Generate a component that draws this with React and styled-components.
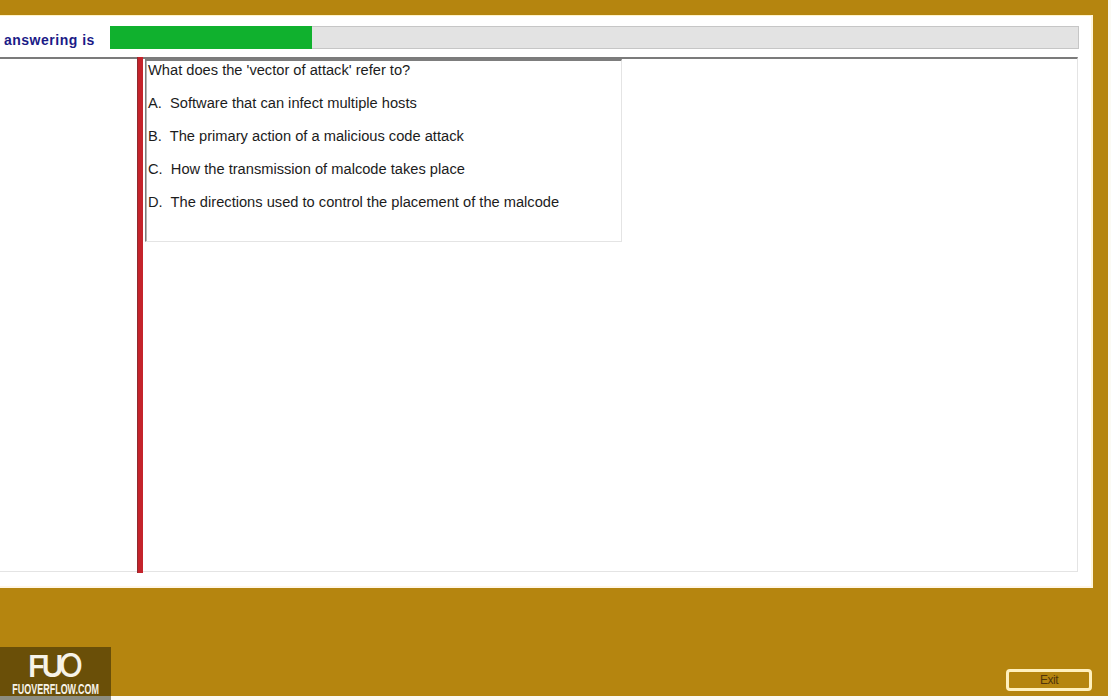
import React from "react";
import styled, { createGlobalStyle } from "styled-components";

const GlobalStyle = createGlobalStyle`
  html, body {
    margin: 0;
    padding: 0;
    height: 100%;
    overflow: hidden;
    background: #fbfaf4;
  }
`;

const Page = styled.div`
  position: relative;
  width: 1108px;
  height: 696px;
  padding-top: 15px;
  box-sizing: border-box;
  background: #b5850f;
  font-family: "Liberation Sans", Arial, sans-serif;
`;

const Panel = styled.div`
  width: 1093px;
  height: 573px;
  background: #ffffff;
  box-shadow: inset -2px 0 0 #fff6dc, inset 0 1px 0 #fff3c8, inset 0 -2px 0 #fff6e6;
`;

const TopRow = styled.div`
  display: flex;
  align-items: center;
  height: 42px;
  padding: 3px 14px 0 4px;
  box-sizing: border-box;
`;

const Label = styled.div`
  width: 106px;
  flex: none;
  padding-top: 4px;
  font-size: 14px;
  font-weight: bold;
  letter-spacing: 0.5px;
  color: #1b1b87;
  white-space: nowrap;
`;

const Track = styled.div`
  flex: 1;
  height: 23px;
  box-sizing: border-box;
  border: 1px solid #c6c6c6;
  background: #e3e3e3;
`;

const Fill = styled.div`
  height: 100%;
  background: #10b12e;
  margin: -1px 0 0 -1px;
  padding-bottom: 2px;
`;

const Body = styled.div`
  display: flex;
  width: 1078px;
  height: 515px;
  box-sizing: border-box;
  border-top: 2px solid #7b7b7b;
  border-right: 1px solid #e4e4e4;
  border-bottom: 1px solid #e4e4e4;
`;

const Side = styled.div`
  width: 137px;
  flex: none;
`;

const RedBar = styled.div`
  width: 6px;
  flex: none;
  margin: -2px 0 -2px;
  background: #c4232b;
  border-left: 1px solid #8f2a2e;
  box-sizing: border-box;
`;

const Card = styled.div`
  width: 477px;
  height: 183px;
  margin-left: 2px;
  box-sizing: border-box;
  padding: 1px 0 0 2px;
  border-top: 2px solid #7d7d7d;
  border-left: 1px solid #7d7d7d;
  border-right: 1px solid #e4e4e4;
  border-bottom: 1px solid #e4e4e4;
  box-shadow: inset 1px 0 0 #b5b5b5;
`;

const Line = styled.div`
  height: 33px;
  line-height: 17px;
  font-size: 14.67px;
  color: #1c1c1c;
  white-space: pre;
`;

const Footer = styled.div`
  display: flex;
  justify-content: flex-end;
  padding: 81px 16px 0 0;
`;

const ExitButton = styled.button`
  width: 86px;
  height: 22px;
  padding: 0;
  border: 3px solid #fff0bd;
  border-radius: 4px;
  background: transparent;
  color: #51350a;
  font-family: "Liberation Sans", Arial, sans-serif;
  font-size: 12px;
  letter-spacing: -0.5px;
`;

const Watermark = styled.div`
  position: absolute;
  left: 0;
  top: 647px;
  width: 111px;
  height: 53px;
  box-sizing: border-box;
  border-bottom: 4px solid #8d8d80;
  background: #6a4f08;
  color: #f7f3e8;
`;

const LogoMark = styled.div`
  display: flex;
  justify-content: center;
  align-items: center;
  height: 35px;
  padding-top: 3px;
  box-sizing: border-box;
  font-family: "Inter", sans-serif;
  font-size: 30px;
  font-weight: 600;
  letter-spacing: -4px;
  line-height: 1;
`;

const LogoRing = styled.span`
  font-size: 32px;
  font-weight: 500;
  letter-spacing: 0;
  margin-left: -1px;
`;

const LogoSite = styled.div`
  display: flex;
  justify-content: center;
  line-height: 14px;
  height: 14px;
`;

const LogoSiteText = styled.span`
  flex: none;
  font-family: "Liberation Sans", sans-serif;
  font-size: 14px;
  font-weight: bold;
  white-space: nowrap;
  transform: scaleX(0.64);
`;

const questionLines = [
  "What does the 'vector of attack' refer to?",
  "A.  Software that can infect multiple hosts",
  "B.  The primary action of a malicious code attack",
  "C.  How the transmission of malcode takes place",
  "D.  The directions used to control the placement of the malcode",
];

export default function App() {
  return (
    <>
      <GlobalStyle />
      <Page>
        <Panel>
          <TopRow>
            <Label>answering is</Label>
            <Track>
              <Fill style={{ width: `${(202 / 969) * 100}%` }} />
            </Track>
          </TopRow>
          <Body>
            <Side />
            <RedBar />
            <Card>
              {questionLines.map((text) => (
                <Line key={text}>{text}</Line>
              ))}
            </Card>
          </Body>
        </Panel>
        <Footer>
          <ExitButton>Exit</ExitButton>
        </Footer>
        <Watermark>
          <LogoMark>
            FU<LogoRing>O</LogoRing>
          </LogoMark>
          <LogoSite>
            <LogoSiteText>FUOVERFLOW.COM</LogoSiteText>
          </LogoSite>
        </Watermark>
      </Page>
    </>
  );
}
